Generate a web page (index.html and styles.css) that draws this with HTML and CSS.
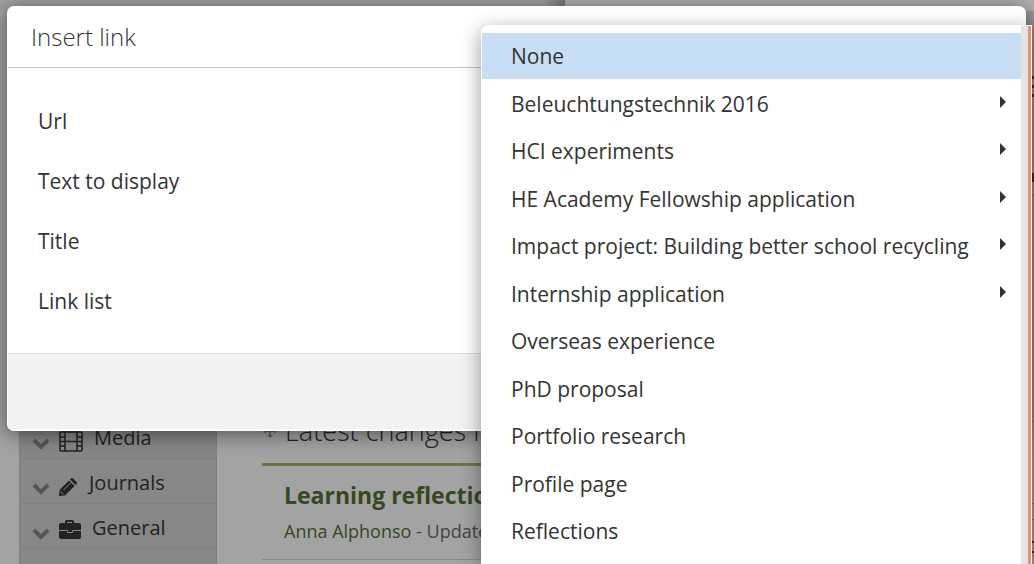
FILE: index.html
```html
<!DOCTYPE html>
<html lang="en">
<head>
    <meta charset="UTF-8">
    <meta name="viewport" content="width=device-width, initial-scale=1.0">
    <title>Insert link</title>
    <link rel="stylesheet" href="styles.css">
</head>
<body>

    <div class="page">
        <nav class="sidebar">
            <a class="side-item" href="#">
                <svg class="chevron" viewBox="0 0 18 12"><path d="M2 2l7 7 7-7"/></svg>
                <svg class="icon film" viewBox="0 0 24 21"><rect x="1" y="1" width="22" height="19" rx="1"/><path d="M6 1v19M18 1v19M6 10.500h12M1 6h5M1 10.500h5M1 15h5M18 6h5M18 10.500h5M18 15h5"/></svg>
                <span>Media</span>
            </a>
            <a class="side-item" href="#">
                <svg class="chevron" viewBox="0 0 18 12"><path d="M2 2l7 7 7-7"/></svg>
                <svg class="icon pencil" viewBox="0 0 18 18"><path d="M0 18l.500-6L10 2.500 15.500 8 6 17.500zM11 1.500L12 .500q1-1 2 0L17.500 4q1 1 0 2l-1 1z"/><path class="cut" d="M1.500 13.500l3 3M4.500 12l7-7"/></svg>
                <span>Journals</span>
            </a>
            <a class="side-item" href="#">
                <svg class="chevron" viewBox="0 0 18 12"><path d="M2 2l7 7 7-7"/></svg>
                <svg class="icon case" viewBox="0 0 22 19"><path d="M7 4V1.500Q7 1 7.500 1h6q.5 0 .5.500V4" class="handle"/><rect y="3" width="22" height="16" rx="2"/><path class="cut" d="M0 10.500h8.500v2h5v-2H22"/></svg>
                <span>General</span>
            </a>
        </nav>

        <main class="content">
            <h2 class="content-title">
                <svg class="move" viewBox="0 0 14 14"><path d="M7 0l3 3H8v3h3V4l3 3-3 3V8H8v3h2l-3 3-3-3h2V8H3v2L0 7l3-3v2h3V3H4z"/></svg>
                <span>Latest changes I can view</span>
            </h2>
            <article class="entry">
                <h3><a href="#">Learning reflections</a></h3>
                <p><a href="#">Anna Alphonso</a> - Updated</p>
            </article>
        </main>

        <aside class="rail">
            <span class="bars"></span>
            <span class="mark"></span>
            <span class="rule"></span>
            <span class="rule lower"></span>
            <span class="rule last"></span>
            <span class="rule near"></span>
            <span class="bars small"></span>
        </aside>
    </div>

    <form class="dialog">
        <h1 class="dialog-title">Insert link</h1>
        <div class="dialog-body">
            <div class="field">
                <label for="url">Url</label>
                <input type="text" id="url">
            </div>
            <div class="field">
                <label for="text">Text to display</label>
                <input type="text" id="text">
            </div>
            <div class="field">
                <label for="title">Title</label>
                <input type="text" id="title">
            </div>
            <div class="field">
                <label for="list">Link list</label>
                <select id="list"><option>None</option></select>
            </div>
        </div>
        <div class="dialog-foot"></div>
    </form>

    <div class="menu">
        <div class="menu-list">
            <button class="menu-item selected">None</button>
            <button class="menu-item has-sub">Beleuchtungstechnik 2016</button>
            <button class="menu-item has-sub">HCI experiments</button>
            <button class="menu-item has-sub">HE Academy Fellowship application</button>
            <button class="menu-item has-sub">Impact project: Building better school recycling</button>
            <button class="menu-item has-sub">Internship application</button>
            <button class="menu-item">Overseas experience</button>
            <button class="menu-item">PhD proposal</button>
            <button class="menu-item">Portfolio research</button>
            <button class="menu-item">Profile page</button>
            <button class="menu-item">Reflections</button>
        </div>
        <div class="scroll-track"><div class="scroll-thumb"></div></div>
    </div>

</body>
</html>
```
FILE: styles.css
```css
* {
    box-sizing: border-box;
}

body {
    margin: 0;
    height: 100vh;
    overflow: hidden;
    position: relative;
    background: #a3a3a3;
    font-family: "Open Sans", sans-serif;
    color: #333;
}

h1, h2, h3, p {
    margin: 0;
}

a {
    text-decoration: none;
}

/* Dimmed page behind the dialog */
.page {
    display: flex;
    height: 100%;
    padding-left: 19px;
    background: linear-gradient(90deg, #a0a0a0 545px, #777 565px, #b0b0b0 565px) no-repeat 0 0 / 100% 11px;
}

.sidebar {
    width: 198px;
    margin-top: 414px;
    background: #878787;
    border: 1px solid #808080;
    border-width: 0 1px;
}

.side-item {
    display: flex;
    align-items: center;
    height: 45px;
    padding: 4px 12px 0;
    border-bottom: 1px solid #808080;
    font-size: 20px;
    color: #222;
}

.side-item span {
    padding-bottom: 2px;
}

.chevron {
    width: 18px;
    height: 12px;
    margin: 12px 8px 0 0;
    fill: none;
    stroke: #555;
    stroke-width: 4;
}

.icon {
    flex: none;
    margin: 7px 12px 0 1px;
    fill: #222;
}

.film {
    width: 24px;
    height: 21px;
    margin-right: 11px;
    fill: none;
    stroke: #222;
    stroke-width: 1.5;
}

.pencil {
    width: 18px;
    height: 18px;
}

.case {
    width: 22px;
    height: 19px;
    margin: 2px 11px 0 1px;
}

.handle {
    fill: none;
    stroke: #222;
    stroke-width: 2;
}

.cut {
    fill: none;
    stroke: #878787;
    stroke-width: 1;
}

.content {
    flex: 1;
    margin: 412px 0 0 45px;
}

.content-title {
    display: flex;
    align-items: center;
    height: 54px;
    padding-bottom: 14px;
    border-bottom: 3px solid #647849;
    font-size: 27px;
    font-weight: 300;
    color: #222;
}

.move {
    width: 14px;
    height: 14px;
    margin: 0 8px 0 1px;
    fill: #666;
}

.entry {
    height: 94px;
    padding: 13px 22px 0;
    border-bottom: 1px solid #888;
}

.entry h3 {
    font-size: 23px;
    line-height: 32px;
}

.entry p {
    font-size: 18px;
    line-height: 40px;
    color: #444;
}

.entry a {
    color: #374722;
}

.rail {
    width: 8px;
    padding-top: 65px;
    border-top: 11px solid #b0b0b0;
    background: #999;
}

.rail span {
    display: block;
}

.bars {
    height: 21px;
    background: repeating-linear-gradient(#333 0 3px, transparent 3px 9px);
}

.mark {
    height: 9px;
    margin-top: 76px;
    background: #333;
}

.rule {
    height: 1px;
    margin-top: 13px;
    background: #777;
}

.lower {
    margin-top: 225px;
}

.last {
    margin-top: 81px;
}

.near {
    margin-top: 15px;
}

.small {
    height: 12px;
    margin-top: 21px;
    background: repeating-linear-gradient(#333 0 2px, transparent 2px 10px);
}

/* Dialog */
.dialog {
    position: absolute;
    top: 6px;
    left: 7px;
    right: 8px;
    padding: 0 1px 2px;
    background: #fff;
    border-radius: 7px;
    box-shadow: 0 3px 20px rgba(0, 0, 0, 0.5);
    overflow: hidden;
}

.dialog-title {
    height: 62px;
    padding: 0 23px;
    border-bottom: 1px solid #c4c4c4;
    font-size: 24px;
    font-weight: 300;
    line-height: 62px;
}

.dialog-body {
    display: grid;
    row-gap: 20px;
    padding: 33px 30px 32px;
}

.field {
    display: flex;
    align-items: center;
    height: 40px;
    font-size: 21px;
}

.field label {
    width: 50%;
}

.field input,
.field select {
    flex: 1;
    height: 40px;
    border: 1px solid #c4c4c4;
    background: #fff;
    font: inherit;
}

.dialog-foot {
    height: 76px;
    border-top: 1px solid #ddd;
    background: #f2f2f2;
}

/* Link list menu */
.menu {
    position: absolute;
    top: 25px;
    left: 481px;
    right: 2px;
    bottom: 0;
    display: flex;
    padding: 1px 1px 0;
    background: #fff;
    border-radius: 8px 0 0 0;
    box-shadow: 0 5px 20px rgba(0, 0, 0, 0.4);
}

.menu-list {
    flex: 1;
    padding-top: 7px;
    overflow: hidden;
}

.menu-item {
    display: flex;
    align-items: center;
    justify-content: space-between;
    width: 100%;
    height: 46px;
    margin-bottom: 1px;
    padding: 0 15px 0 29px;
    border: 0;
    background: none;
    font: inherit;
    font-size: 21px;
    color: #333;
    text-align: left;
}

.menu-item:nth-child(odd) {
    margin-bottom: 2px;
}

.menu-item.selected {
    background: #c7def4;
}

.has-sub::after {
    content: "";
    margin-bottom: 4px;
    border: 6px solid transparent;
    border-left-color: #333;
    border-right: 0;
}

.scroll-track {
    display: flex;
    justify-content: flex-end;
    width: 10px;
    background: #e5e5e5;
}

.scroll-thumb {
    width: 3px;
    background: #ef8e68;
}
```
